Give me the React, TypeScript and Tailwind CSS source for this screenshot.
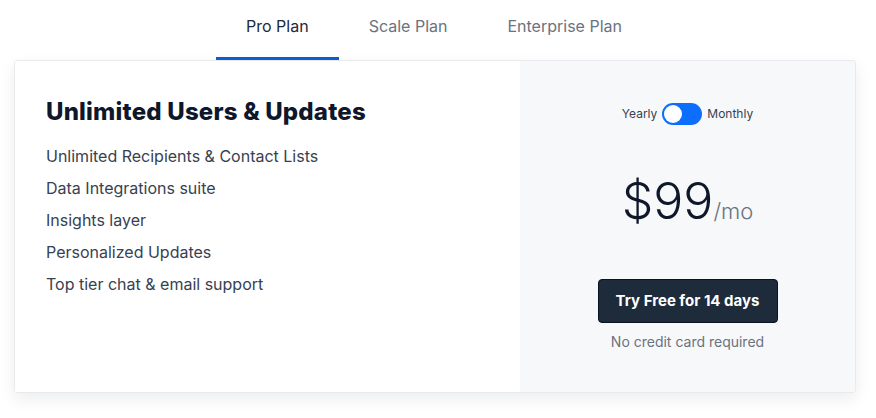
export default function App() {
  const features = [
    "Unlimited Recipients & Contact Lists",
    "Data Integrations suite",
    "Insights layer",
    "Personalized Updates",
    "Top tier chat & email support",
  ];
  const tabs = ["Pro Plan", "Scale Plan", "Enterprise Plan"];

  return (
    <div className="min-h-[418px] w-[876px] bg-white font-['Inter',sans-serif]">
      <div className="flex justify-center pr-[8px]">
        {tabs.map((t, i) => (
          <div
            key={t}
            className={
              i === 0
                ? "h-[60px] border-b-[3px] border-[#0b5bd3] px-[30px] pt-[14px] text-[16px] text-[#1f2937]"
                : "h-[60px] px-[30px] pt-[14px] text-[16px] text-[#6b7280]"
            }
          >
            {t}
          </div>
        ))}
      </div>
      <div className="mx-[14px] flex h-[333px] w-[842px] overflow-hidden rounded-[3px] border border-[#e8eaee] shadow-[0_6px_16px_rgba(15,23,42,0.08)]">
        <div className="w-[505px] bg-white pl-[31px] pt-[36px]">
          <h2 className="text-[24px] font-extrabold leading-[30px] tracking-[0.2px] text-[#0f172a]">
            Unlimited Users &amp; Updates
          </h2>
          <ul className="mt-[17px] flex flex-col gap-[8px]">
            {features.map((f) => (
              <li key={f} className="text-[16px] leading-[24px] text-[#374151]">
                {f}
              </li>
            ))}
          </ul>
        </div>
        <div className="flex flex-1 flex-col items-center bg-[#f7f8fa] pt-[42px]">
          <div className="flex items-center gap-[5px] text-[12px] text-[#374151]">
            <span>Yearly</span>
            <span className="flex h-[22px] w-[40px] items-center rounded-full bg-[#0d6efd] px-[2px]">
              <span className="h-[18px] w-[18px] rounded-full bg-white" />
            </span>
            <span>Monthly</span>
          </div>
          <div className="mt-[46px] flex items-baseline">
            <span className="text-[50px] font-light leading-[60px] text-[#0f172a]">$99</span>
            <span className="text-[22px] font-light text-[#6b7280]">/mo</span>
          </div>
          <button className="mt-[48px] h-[44px] w-[180px] rounded-[4px] border border-[#0b1220] bg-[#1e2b3b] text-[15px] font-bold text-white">
            Try Free for 14 days
          </button>
          <div className="mt-[8px] text-[14px] text-[#6b7280]">No credit card required</div>
        </div>
      </div>
    </div>
  );
}
